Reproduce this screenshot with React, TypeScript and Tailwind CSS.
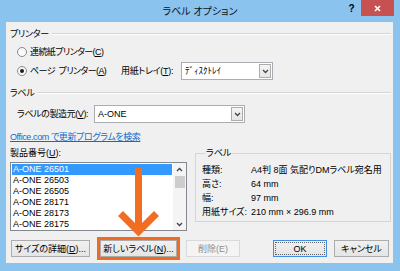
import React from 'react';

const font = "[font-family:'Liberation_Sans','Noto_Sans_CJK_JP',sans-serif] [font-feature-settings:'palt']";

const Chevron = () => (
  <svg width="7" height="5" viewBox="0 0 7 5">
    <path d="M1 1l2.5 2.5L6 1" fill="none" stroke="#444" strokeWidth="1.3" />
  </svg>
);

const GroupHeader = ({ label }: { label: string }) => (
  <div className="flex h-[12px] items-center">
    <span className="leading-[12px] tracking-[-0.3px]">{label}</span>
    <div className="ml-[3px] h-[2px] flex-1 border-t border-b border-t-[#d5d5d5] border-b-white" />
  </div>
);

const Radio = ({ checked }: { checked?: boolean }) => (
  <div className="flex h-[10px] w-[10px] items-center justify-center rounded-full border border-[#8a8a8a] bg-linear-to-b from-[#f4f4f4] to-white">
    {checked && <div className="h-[4px] w-[4px] rounded-full bg-[#1e1e1e]" />}
  </div>
);

const Select = ({ value, className = '' }: { value: string; className?: string }) => (
  <div className={`flex h-[18px] items-stretch border border-[#abadb3] bg-white p-[1px] ${className}`}>
    <div className="flex flex-1 items-center pl-[2px] leading-[12px]">{value}</div>
    <div className="flex w-[12px] items-center justify-center border border-[#acacac] bg-linear-to-b from-[#f5f5f5] to-[#e6e6e6]">
      <Chevron />
    </div>
  </div>
);

const Button = ({ label, className = '', disabled = false }: { label: React.ReactNode; className?: string; disabled?: boolean }) => (
  <div
    className={`flex h-[17px] items-center justify-center border leading-[12px] ${
      disabled
        ? 'border-[#d9d9d9] bg-[#f4f4f4] text-[#8d8d8d]'
        : 'border-[#acacac] bg-linear-to-b from-[#f0f0f0] to-[#e5e5e5]'
    } ${className}`}
  >
    {label}
  </div>
);

const items = ['A-ONE 26501', 'A-ONE 26503', 'A-ONE 26505', 'A-ONE 28171', 'A-ONE 28173', 'A-ONE 28175'];

const details = [
  { k: '種類:', v: 'A4判 8面 気配りDMラベル宛名用' },
  { k: '高さ:', v: '64 mm' },
  { k: '幅:', v: '97 mm' },
  { k: '用紙サイズ:', v: '210 mm × 296.9 mm' },
];

export default function App() {
  return (
    <div className={`relative flex h-[271px] w-[400px] flex-col overflow-hidden bg-[#8bc3ef] text-[9px] text-black ${font}`}>
      {/* title bar */}
      <div className="flex h-[22px] items-start">
        <div className="w-[58px]" />
        <div className="flex-1 pt-[6px] text-center text-[10px] leading-[12px] text-[#111]">ラベル オプション</div>
        <div className="flex w-[58px] items-start pr-[6px]">
          <div className="w-[19px] pt-[3px] text-center text-[10px] font-bold leading-[12px]">?</div>
          <div className="flex h-[16px] w-[33px] items-center justify-center bg-[#c75050]">
            <svg width="7" height="7" viewBox="0 0 7 7">
              <path d="M1 1l5 5M6 1l-5 5" stroke="#fff" strokeWidth="1.6" />
            </svg>
          </div>
        </div>
      </div>

      {/* client area */}
      <div className="mb-[8px] ml-[6px] mr-[7px] flex flex-1 flex-col bg-[#f0f0f0] pl-[4px] pr-[2px] pt-[6px]">
        <GroupHeader label="プリンター" />

        <div className="mt-[5px] flex h-[14px] items-center pl-[7px]">
          <Radio />
          <span className="ml-[3px] leading-[12px] tracking-[-0.6px]">連続紙プリンター(<span className="underline">C</span>)</span>
        </div>

        <div className="mt-[3px] flex h-[18px] items-center">
          <div className="flex w-[111px] items-center pl-[7px]">
            <Radio checked />
            <span className="ml-[3px] leading-[12px] tracking-[-0.6px]">ページ&nbsp;&nbsp;プリンター(<span className="underline">A</span>)</span>
          </div>
          <div className="w-[60px] leading-[12px] tracking-[-0.3px]">用紙トレイ(<span className="underline">T</span>):</div>
          <Select value="ﾃﾞｨｽｸﾄﾚｲ" className="w-[92px]" />
        </div>

        <div className="mt-[7px]">
          <GroupHeader label="ラベル" />
        </div>

        <div className="mt-[6px] flex h-[18px] items-center pl-[7px]">
          <div className="w-[77px] leading-[12px] tracking-[-0.4px]">ラベルの製造元(<span className="underline">V</span>):</div>
          <Select value="A-ONE" className="w-[151px]" />
        </div>

        <div className="mt-[8px] h-[12px] leading-[12px]">
          <span className="tracking-[-0.4px] text-[#0f6cce] underline">Office.com で更新プログラムを検索</span>
        </div>

        <div className="mt-[4px] flex">
          <div className="flex w-[177px] flex-col">
            <div className="h-[12px] leading-[12px]">製品番号(<span className="underline">U</span>):</div>
            <div className="mt-[3px] flex h-[69px] border border-[#828790] bg-white">
              <div className="flex flex-1 flex-col pt-[1px]">
                {items.map((it, i) => (
                  <div
                    key={it}
                    className={`mx-[1px] h-[11px] pl-[1px] leading-[11px] ${i === 0 ? 'bg-[#3399ff] text-white' : ''}`}
                  >
                    {it}
                  </div>
                ))}
              </div>
              <div className="flex w-[13px] flex-col items-center bg-[#f4f4f4]">
                <div className="flex h-[12px] items-center justify-center">
                  <svg width="7" height="5" viewBox="0 0 7 5">
                    <path d="M1 4l2.5-2.5L6 4" fill="none" stroke="#444" strokeWidth="1.3" />
                  </svg>
                </div>
                <div className="mt-[1px] h-[12px] w-[10px] bg-[#cdcdcd]" />
                <div className="flex-1" />
                <div className="flex h-[12px] items-center justify-center">
                  <Chevron />
                </div>
              </div>
            </div>
          </div>

          <fieldset className="ml-[8px] h-[75px] flex-1 border border-[#d5d5d5] pl-[6px]">
            <legend className="ml-[3px] px-[1px] leading-[12px]">ラベル</legend>
            <div className="flex flex-col pt-[4px]">
              {details.map((d) => (
                <div key={d.k} className="flex h-[14px] items-center leading-[12px]">
                  <span className="w-[49px]">{d.k}</span>
                  <span>{d.v}</span>
                </div>
              ))}
            </div>
          </fieldset>
        </div>

        <div className="mt-[9px] flex h-[17px] items-center">
          <Button
            className="ml-[1px] w-[79px]"
            label={<>サイズの詳細(<span className="underline">D</span>)...</>}
          />
          <div className="ml-[7px] border-[3px] border-[#f06a22]">
            <Button className="w-[77px]" label={<>新しいラベル(<span className="underline">N</span>)...</>} />
          </div>
          <Button className="ml-[6px] w-[54px]" disabled label="削除(E)" />
          <div className="ml-[33px] flex h-[17px] w-[54px] border border-[#3c8ee8] bg-linear-to-b from-[#f0f0f0] to-[#e5e5e5] p-[1px]">
            <div className="flex flex-1 items-center justify-center border border-dotted border-[#666] leading-[12px]">OK</div>
          </div>
          <Button className="ml-[7px] w-[55px]" label="キャンセル" />
        </div>
      </div>

      {/* annotation arrow */}
      <svg className="absolute left-[110px] top-[160px]" width="56" height="82" viewBox="0 0 56 82">
        <path d="M28.5 8V71" stroke="#f26d21" strokeWidth="7" fill="none" />
        <path d="M10.5 53.5L28.5 71.5L46.5 53.5" stroke="#f26d21" strokeWidth="7" fill="none" strokeLinejoin="miter" />
      </svg>
    </div>
  );
}
